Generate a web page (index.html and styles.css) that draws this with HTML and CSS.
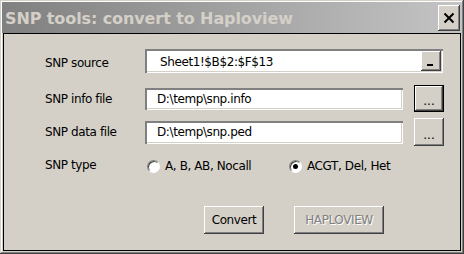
FILE: index.html
```html
<!DOCTYPE html>
<html>
<head>
    <meta charset="utf-8">
    <title>SNP tools: convert to Haploview</title>
    <link rel="stylesheet" href="styles.css">
</head>
<body>
    <div class="window">
        <div class="titlebar">
            <span class="title">SNP tools: convert to Haploview</span>
            <span class="close">
                <svg width="12" height="12" viewBox="0 0 12 12">
                    <path d="M1.5 1.5 L10.5 10.5 M10.5 1.5 L1.5 10.5" stroke="#000" stroke-width="2" fill="none"/>
                </svg>
            </span>
        </div>

        <div class="client">
            <div class="row row-source">
                <span class="label low">SNP source</span>
                <div class="combo">
                    <span class="value">Sheet1!$B$2:$F$13</span>
                    <span class="drop"><i></i></span>
                </div>
            </div>

            <div class="row row-info">
                <span class="label">SNP info file</span>
                <div class="edit"><span class="value">D:\temp\snp.info</span></div>
                <span class="btn browse default">...</span>
            </div>

            <div class="row row-data">
                <span class="label">SNP data file</span>
                <div class="edit edit-tall"><span class="value">D:\temp\snp.ped</span></div>
                <span class="btn browse tall">...</span>
            </div>

            <div class="row row-type">
                <span class="label">SNP type</span>
                <span class="option first"><i class="radio"></i>A, B, AB, Nocall</span>
                <span class="option"><i class="radio checked"></i>ACGT, Del, Het</span>
            </div>

            <div class="actions">
                <span class="btn convert">Convert</span>
                <span class="btn haplo disabled">HAPLOVIEW</span>
            </div>
        </div>
    </div>
</body>
</html>
```

FILE: styles.css
```css
* {
    box-sizing: border-box;
}

body {
    margin: 0;
    background-color: #d4d0c8;
    color: #000;
    font-family: "DejaVu Sans", sans-serif;
    font-size: 12px;
    letter-spacing: -0.4px;
}

.window {
    width: 464px;
    height: 254px;
    padding: 2px;
    display: flex;
    flex-direction: column;
    background-color: #d4d0c8;
    box-shadow: inset -1px -1px #404040, inset 1px 1px #d4d0c8,
                inset -2px -2px #808080, inset 2px 2px #fff;
}

.titlebar {
    height: 31px;
    flex: none;
    display: flex;
    align-items: center;
    justify-content: space-between;
    padding: 1px 2px 0 3px;
    background: linear-gradient(to right, #808080, #c4c4c4);
}

.title {
    color: #d4d0c8;
    font-weight: bold;
    font-size: 16px;
    letter-spacing: -0.1px;
}

.close {
    width: 22px;
    height: 26px;
    display: flex;
    align-items: center;
    justify-content: center;
    background-color: #d4d0c8;
    box-shadow: inset -1px -1px #404040, inset 1px 1px #fff,
                inset -2px -2px #808080;
}

.client {
    flex: 1;
    margin: 0 1px 1px 1px;
    padding: 15px 0 0 41px;
    display: flex;
    flex-direction: column;
    border: 1px solid #000;
}

.row {
    display: flex;
    align-items: center;
}

.row-source { height: 24px; }
.row-info { height: 27px; margin-top: 12px; }
.row-data { height: 28px; margin-top: 6px; }
.row-type { height: 22px; margin-top: 8px; }

.label {
    width: 100px;
    flex: none;
}

.label.low {
    padding-top: 3px;
}

.combo, .edit {
    display: flex;
    align-items: center;
    background-color: #fff;
    box-shadow: inset 2px 2px #808080, inset -1px -1px #fff,
                inset -2px -2px #d4d0c8;
}

.combo {
    width: 298px;
    height: 24px;
    padding: 2px 2px 2px 15px;
    justify-content: space-between;
}

.combo .value {
    padding-top: 1px;
}

.drop {
    width: 20px;
    height: 20px;
    position: relative;
    background-color: #d4d0c8;
    box-shadow: inset -1px -1px #404040, inset 1px 1px #fff,
                inset -2px -2px #808080;
}

.drop i {
    position: absolute;
    left: 6px;
    bottom: 5px;
    width: 6px;
    height: 2px;
    background-color: #000;
}

.edit {
    width: 258px;
    height: 22px;
    padding-left: 12px;
}

.edit-tall {
    height: 23px;
}

.btn {
    display: flex;
    align-items: center;
    justify-content: center;
    background-color: #d4d0c8;
    box-shadow: inset -1px -1px #404040, inset 1px 1px #fff,
                inset -2px -2px #808080;
}

.browse {
    width: 30px;
    height: 27px;
    margin-left: 11px;
    padding-top: 5px;
    letter-spacing: 0;
}

.browse.tall {
    height: 28px;
}

.browse.default {
    border: 1px solid #000;
}

.option {
    display: flex;
    align-items: center;
    gap: 5px;
    margin-left: 2px;
    padding-top: 2px;
}

.option.first {
    width: 140px;
}

.radio {
    width: 13px;
    height: 13px;
    flex: none;
    border-radius: 50%;
    background-color: #fff;
    border: 1px solid;
    border-color: #808080 #fff #fff #808080;
    box-shadow: inset 1px 1px #404040, 0 0 0 0.5px #d4d0c8;
    display: flex;
    align-items: center;
    justify-content: center;
}

.radio.checked::after {
    content: "";
    width: 5px;
    height: 5px;
    border-radius: 50%;
    background-color: #000;
}

.actions {
    display: flex;
    gap: 30px;
    margin: 30px 0 0 159px;
}

.convert {
    width: 60px;
    height: 28px;
}

.haplo {
    width: 90px;
    height: 28px;
}

.disabled {
    color: #808080;
    text-shadow: 1px 1px #fff;
}
```
